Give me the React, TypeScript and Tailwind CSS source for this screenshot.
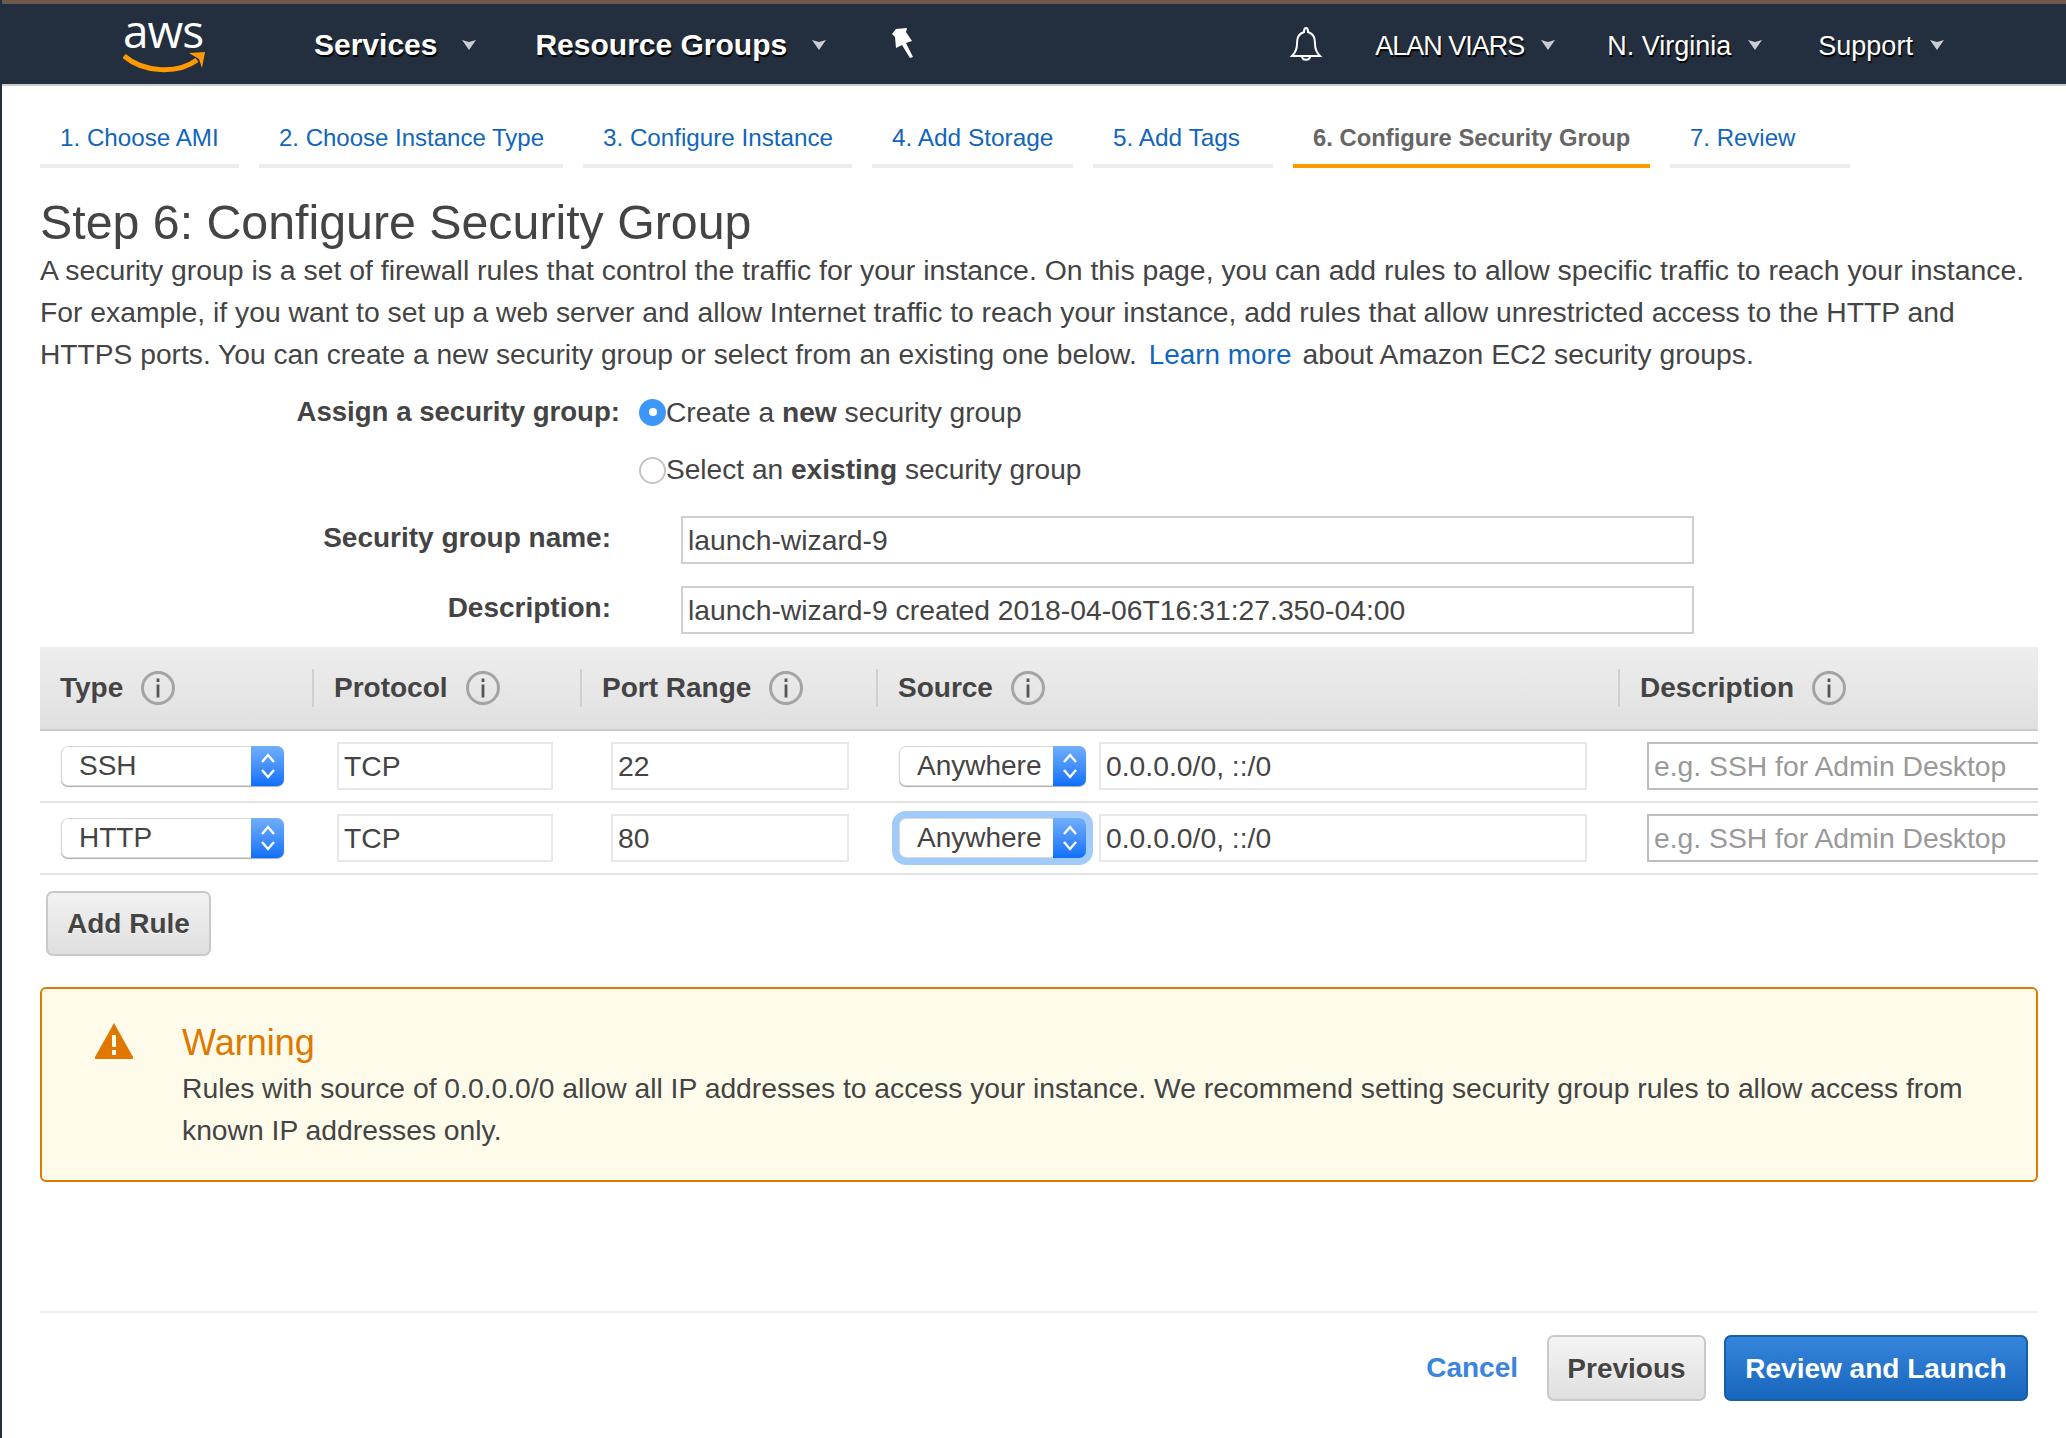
import React from "react";

const Caret = ({ className = "" }: { className?: string }) => (
  <svg width="16" height="11" viewBox="0 0 16 11" className={className}>
    <path d="M1 1l7 2 7-2-7 10z" fill="#c9ccd0" />
  </svg>
);

const NavItem = ({ label, bold, gap, textClass = "" }: { label: string; bold?: boolean; gap: string; textClass?: string }) => (
  <div className={`flex items-center ${gap}`}>
    <span
      className={`text-white [text-shadow:1px_2px_1px_#000] ${bold ? "font-bold text-[30px]" : "mt-[4px] text-[27px]"} ${textClass}`}
    >
      {label}
    </span>
    <Caret />
  </div>
);

const Info = () => (
  <svg width="34" height="34" viewBox="0 0 34 34" className="shrink-0">
    <circle cx="17" cy="17" r="15.5" fill="none" stroke="#a4a4a4" strokeWidth="3" />
    <rect x="15.6" y="13.500" width="2.8" height="13" fill="#555" />
    <rect x="15.6" y="7.500" width="2.8" height="3.500" fill="#555" />
  </svg>
);

const HeaderCell = ({ label, className }: { label: string; className: string }) => (
  <div className={`flex h-full items-center ${className}`}>
    <div className="flex h-[38px] items-center gap-[18px] border-l-2 border-[#d0d0d0]">
      <span className="ml-[20px] text-[28px] font-bold text-[#444]">{label}</span>
      <Info />
    </div>
  </div>
);

const Select = ({ label, className, focus }: { label: string; className: string; focus?: boolean }) => (
  <div
    className={`relative flex h-[40px] items-center rounded-[7px] border border-[#d8d8d8] bg-white shadow-[0_1px_1px_#aaa] ${className} ${
      focus ? "ring-[7px] ring-[#a0cbfa]" : ""
    }`}
  >
    <span className="ml-[17px] text-[28px] text-[#444]">{label}</span>
    <div className="absolute right-[-1px] top-[-1px] flex h-[40px] w-[33px] flex-col items-center justify-center rounded-r-[7px] bg-linear-to-b from-[#70aefc] to-[#0a6ffb]">
      <svg width="16" height="30" viewBox="0 0 16 30">
        <path d="M2 11l6-7 6 7M2 19l6 7 6-7" fill="none" stroke="#fff" strokeWidth="2.4" />
      </svg>
    </div>
  </div>
);

const Field = ({ value, className, placeholder }: { value?: string; className: string; placeholder?: boolean }) => (
  <input
    readOnly
    value={placeholder ? undefined : value}
    placeholder={placeholder ? value : undefined}
    className={`h-[48px] bg-white px-[5px] text-[28.3px] text-[#444] outline-none placeholder:text-[#999] ${
      placeholder ? "border-y-2 border-l-2 border-[#bdbdbd]" : "border-2 border-[#e8e8e8]"
    } ${className}`}
  />
);

const Row = ({ type, port, focus }: { type: string; port: string; focus?: boolean }) => (
  <div className="flex h-[72px] items-center border-b-2 border-[#e2e2e2]">
    <Select label={type} className="ml-[21px] w-[223px]" />
    <Field value="TCP" className="ml-[53px] w-[216px]" />
    <Field value={port} className="ml-[58px] w-[238px]" />
    <Select label="Anywhere" className="ml-[50px] w-[187px]" focus={focus} />
    <Field value="0.0.0.0/0, ::/0" className="ml-[13px] w-[488px]" />
    <Field value="e.g. SSH for Admin Desktop" placeholder className="ml-[60px] w-[391px]" />
  </div>
);

const tabs = [
  ["1. Choose AMI", "w-[199px] text-[24.200px]"],
  ["2. Choose Instance Type", "w-[304px] text-[24px]"],
  ["3. Configure Instance", "w-[269px] text-[24.200px]"],
  ["4. Add Storage", "w-[201px] text-[24.400px]"],
  ["5. Add Tags", "w-[180px] text-[24.400px]"],
  ["6. Configure Security Group", "w-[357px] text-[23.800px]"],
  ["7. Review", "w-[180px] text-[24px]"],
];

export default function App() {
  return (
    <div className="flex h-[1438px] w-[2066px] flex-col overflow-hidden border-l-2 border-[#232f3e] bg-white font-['Liberation_Sans',Arial,sans-serif] text-[#444]">
      <div className="h-[4px] bg-[#6b5a48]" />
      <header className="flex h-[82px] shrink-0 items-center border-b-2 border-[#cccccc] bg-[#232f3e]">
        <div className="relative ml-[121px] h-[60px] w-[84px]">
          <span className="absolute left-0 top-[-7px] text-[46px] leading-[46px] tracking-[-1px] text-white font-['Open_Sans',sans-serif]">
            aws
          </span>
          <svg width="84" height="24" viewBox="0 0 84 24" className="absolute left-0 top-[36px]">
            <path d="M1 6c20 17 54 18 73 4" fill="none" stroke="#f90" strokeWidth="5" />
            <path d="M66 3l16-1-3 16-3-9z" fill="#f90" />
          </svg>
        </div>
        <div className="ml-[107px]">
          <NavItem label="Services" bold gap="gap-[24px]" />
        </div>
        <div className="ml-[58px]">
          <NavItem label="Resource Groups" bold gap="gap-[24px]" textClass="text-[29.800px]" />
        </div>
        <svg width="26" height="32" viewBox="0 0 26 32" className="ml-[63px]">
          <path d="M6 1l11-1-1 4 6 9-6 2 7 14-3 1-8-13-6 3-1-11-3-3z" fill="#fff" />
        </svg>
        <svg width="34" height="36" viewBox="0 0 34 36" className="ml-[373px]">
          <path
            d="M17 2c2 0 2 2 2 4 6 2 7 6 7 12 0 6 2 9 5 12H3c3-3 5-6 5-12 0-6 1-10 7-12 0-2 0-4 2-4zM13 30c0 5 8 5 8 0"
            fill="none"
            stroke="#fff"
            strokeWidth="2"
          />
        </svg>
        <div className="ml-[52px]">
          <NavItem label="ALAN VIARS" gap="gap-[16px]" textClass="tracking-[-1px]" />
        </div>
        <div className="ml-[51px]">
          <NavItem label="N. Virginia" gap="gap-[16px]" textClass="text-[27.500px]" />
        </div>
        <div className="ml-[55px]">
          <NavItem label="Support" gap="gap-[16px]" />
        </div>
      </header>

      <main className="flex flex-1 flex-col pl-[38px] pr-[28px]">
        <nav className="mt-[16px] flex gap-[20px]">
          {tabs.map(([t, w], i) => (
            <div
              key={t}
              className={`h-[66px] border-b-4 pl-[20px] pt-[20px] leading-[32px] ${w} ${
                i === 5 ? "border-[#ff9900] font-bold text-[#666]" : "border-[#ececec] text-[#1166bb]"
              }`}
            >
              {t}
            </div>
          ))}
        </nav>

        <h1 className="mt-[28px] text-[48.300px] leading-[52px] font-normal text-[#444]">Step 6: Configure Security Group</h1>
        <p className="mt-[1px] text-[28.400px] leading-[42px] text-[#444]">
          A security group is a set of firewall rules that control the traffic for your instance. On this page, you can add rules to allow specific traffic to reach your instance.
          <br />
          <span className="text-[28.300px]">
            For example, if you want to set up a web server and allow Internet traffic to reach your instance, add rules that allow unrestricted access to the HTTP and
          </span>
          <br />
          <span className="text-[28.200px]">HTTPS ports. You can create a new security group or select from an existing one below.</span>
          <span className="ml-[12px] text-[27.900px] text-[#1166bb]">Learn more</span>
          <span className="ml-[11px] text-[28.300px]">about Amazon EC2 security groups.</span>
        </p>

        <div className="mt-[7px] flex h-[58px] items-center">
          <label className="w-[580px] text-right text-[27.600px] font-bold">Assign a security group:</label>
          <span className="ml-[19px] flex h-[27px] w-[27px] items-center justify-center rounded-full bg-[#3d97fb]">
            <span className="h-[8px] w-[8px] rounded-full bg-white" />
          </span>
          <span className="text-[28.200px]">
            Create a <b>new</b> security group
          </span>
        </div>
        <div className="flex h-[59px] items-center">
          <span className="ml-[599px] h-[27px] w-[27px] rounded-full border-2 border-[#c4c4c4] bg-white" />
          <span className="text-[28.100px]">
            Select an <b>existing</b> security group
          </span>
        </div>
        <div className="mt-[16px] flex items-center">
          <label className="mb-[5px] w-[571px] text-right text-[28px] font-bold">Security group name:</label>
          <input readOnly value="launch-wizard-9" className="ml-[70px] h-[48px] w-[1013px] border-2 border-[#cfcfcf] px-[5px] text-[28.300px] outline-none" />
        </div>
        <div className="mt-[22px] flex items-center">
          <label className="mb-[5px] w-[571px] text-right text-[28px] font-bold">Description:</label>
          <input readOnly value="launch-wizard-9 created 2018-04-06T16:31:27.350-04:00" className="ml-[70px] h-[48px] w-[1013px] border-2 border-[#cfcfcf] px-[5px] text-[28.300px] outline-none" />
        </div>

        <div className="mt-[13px] flex h-[84px] shrink-0 items-center border-b-2 border-[#cccccc] bg-linear-to-b from-[#eeeeee] to-[#e0e0e0]">
          <div className="ml-[20px] flex w-[252px] items-center gap-[18px]">
            <span className="text-[28px] font-bold">Type</span>
            <Info />
          </div>
          <HeaderCell label="Protocol" className="w-[268px]" />
          <HeaderCell label="Port Range" className="w-[296px]" />
          <HeaderCell label="Source" className="w-[742px]" />
          <HeaderCell label="Description" className="w-[300px]" />
        </div>
        <Row type="SSH" port="22" />
        <Row type="HTTP" port="80" focus />

        <button className="mt-[16px] ml-[6px] h-[65px] w-[165px] rounded-[7px] border-2 border-[#c9c9c9] bg-linear-to-b from-[#f2f2f2] to-[#dfdfdf] text-[28px] font-bold [text-shadow:0_1px_0_#fff]">
          Add Rule
        </button>

        <section className="mt-[31px] flex h-[195px] rounded-[6px] border-2 border-[#e07700] bg-[#fffbea]">
          <svg width="40" height="38" viewBox="0 0 40 38" className="ml-[52px] mt-[33px]">
            <path fillRule="evenodd" d="M20 1l19 34c.7 1.500 0 2-1.500 2h-35C1 37 .3 36.500 1 35zM18 13v12h4V13zM18 28v5h4v-5z" fill="#e07700" />
          </svg>
          <div className="ml-[48px] mt-[33px]">
            <h2 className="text-[36px] leading-[42px] font-normal text-[#e07700]">Warning</h2>
            <p className="mt-[3px] text-[28.270px] leading-[42px]">
              Rules with source of 0.0.0.0/0 allow all IP addresses to access your instance. We recommend setting security group rules to allow access from
              <br />
              known IP addresses only.
            </p>
          </div>
        </section>

        <footer className="mt-[129px] flex items-center justify-end border-t-2 border-[#eeeeee] pt-[22px] pr-[10px]">
          <span className="mr-[1px] text-[28px] font-bold text-[#3a84dd]">Cancel</span>
          <button className="ml-[28px] h-[66px] w-[159px] rounded-[7px] border-2 border-[#c9c9c9] bg-linear-to-b from-[#f4f4f4] to-[#dfdfdf] pt-[1px] text-[28px] font-bold [text-shadow:0_1px_0_#fff]">
            Previous
          </button>
          <button className="ml-[18px] h-[66px] w-[304px] rounded-[7px] border-2 border-[#155ea8] bg-linear-to-b from-[#3585dc] to-[#1766bc] pt-[1px] text-[28px] font-bold text-white">
            Review and Launch
          </button>
        </footer>
      </main>
    </div>
  );
}
